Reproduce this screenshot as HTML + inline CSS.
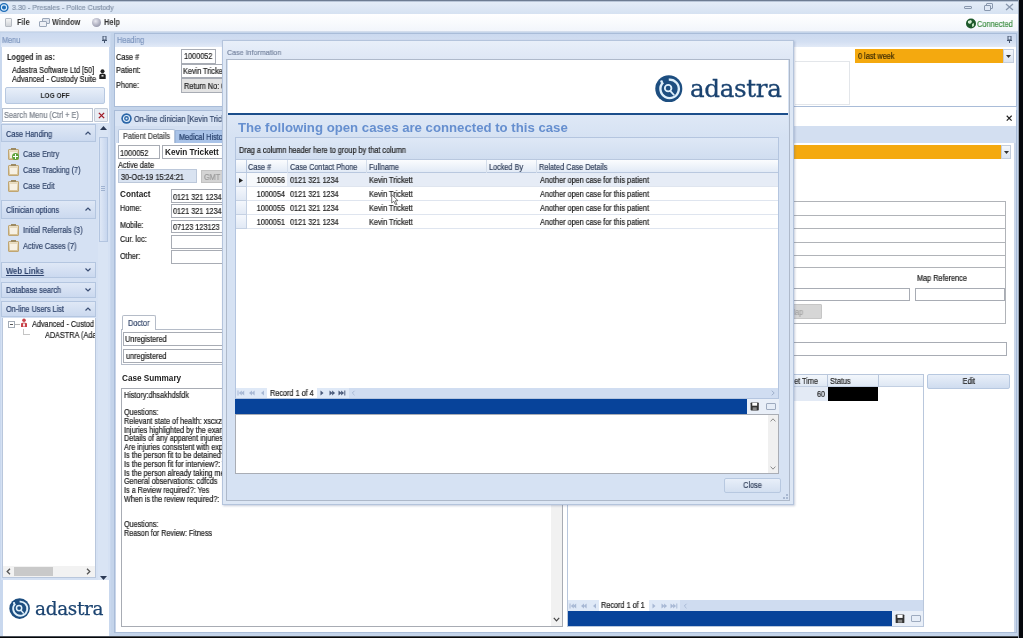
<!DOCTYPE html>
<html lang="en">
<head>
<meta charset="utf-8">
<title>3.30 - Presales - Police Custody</title>
<style>
*{box-sizing:border-box;margin:0;padding:0}
html,body{width:1023px;height:638px;overflow:hidden}
body{position:relative;background:#c4d4ea;font-family:"Liberation Sans",sans-serif;font-size:8.2px;color:#1c1c1c;line-height:1}
.a{position:absolute}
.t{position:absolute;white-space:nowrap;margin-top:1px;will-change:transform;-webkit-text-stroke:.2px;transform:scaleX(.89);transform-origin:0 50%;line-height:10px;height:10px}
.tr{transform-origin:100% 50%;text-align:right}
.b{position:absolute;white-space:nowrap;font-weight:bold;will-change:transform;line-height:10px;height:10px}
.in{position:absolute;background:#fff;border:1px solid #a8acb4;overflow:hidden}
.hd{position:absolute;background:linear-gradient(#cbd9ef,#d3dff2 60%,#e2eaf7)}
.w{background:#fff}
.gh{position:absolute;left:1px;width:95px;background:linear-gradient(#dfe8f6,#cbd9ef);border:1px solid #b4c6e0;color:#2a3f66}
.gh .t{left:4px;top:3px;color:#2c416a}
.chev{position:absolute;left:83px;top:5px;width:6px;height:4px}
.ic{position:absolute;width:11px;height:11px;border-radius:1px;background:linear-gradient(#eadfc6,#d6c193);border:1px solid #c0a673}
.ic:before{content:"";position:absolute;left:2px;top:-2px;width:5px;height:2px;background:#9c8a62}
.ic:after{content:"";position:absolute;left:1px;top:2px;width:7px;height:6px;background:#f7f1e4}
.nav{color:#33466a}
</style>
</head>
<body>
<div id="root" style="position:absolute;left:0;top:0;width:1023px;height:638px;overflow:hidden">

<!-- ===== window chrome ===== -->
<div class="a" style="left:0;top:0;width:1023px;height:14px;background:linear-gradient(#e6eef8,#d6e2f2)"></div>
<div class="a" style="left:0;top:0;width:1023px;height:1px;background:#6d7c92"></div>
<div class="a" style="left:0;top:1px;width:1023px;height:1px;background:#b9c6d8"></div>
<svg class="a" style="left:0;top:2px" width="10" height="11" viewBox="0 0 10 11"><circle cx="4" cy="5.5" r="4.6" fill="#1f6db8"/><circle cx="4" cy="5.5" r="2.6" fill="none" stroke="#d9ecfb" stroke-width="1.1"/></svg>
<div class="t" style="left:12px;top:2px;color:#8493a8;font-size:8px">3.30 - Presales - Police Custody</div>
<!-- window buttons -->
<div class="a" style="left:964px;top:6px;width:8px;height:3px;border:1px solid #8897ad;border-radius:1px"></div>
<div class="a" style="left:986px;top:3px;width:7px;height:6px;border:1px solid #8897ad;border-radius:1px"></div>
<div class="a" style="left:984px;top:5px;width:7px;height:6px;border:1px solid #8897ad;border-radius:1px;background:#dfe8f5"></div>
<svg class="a" style="left:1005px;top:3px" width="9" height="8" viewBox="0 0 9 8"><path d="M1 1 L8 7 M8 1 L1 7" stroke="#8897ad" stroke-width="1.3" fill="none"/></svg>

<!-- menu bar -->
<div class="a" style="left:0;top:14px;width:1023px;height:18px;background:linear-gradient(#ffffff,#f1f5fb)"></div>
<div class="a" style="left:0;top:31px;width:1023px;height:1px;background:#d3ddec"></div>
<div class="a" style="left:5px;top:18px;width:7px;height:9px;background:linear-gradient(#f6f6f6,#cfd3d8);border:1px solid #b5bac2;border-radius:1px"></div>
<div class="b" style="left:17px;top:18px;font-size:8.2px;color:#333;transform:scaleX(.9);transform-origin:0 50%">File</div>
<div class="a" style="left:42px;top:18px;width:8px;height:6px;background:#dfe5ee;border:1px solid #9aa6b8;border-radius:1px"></div>
<div class="a" style="left:39px;top:21px;width:8px;height:6px;background:#eef1f6;border:1px solid #9aa6b8;border-radius:1px"></div>
<div class="b" style="left:52px;top:18px;font-size:8.2px;color:#333;transform:scaleX(.9);transform-origin:0 50%">Window</div>
<div class="a" style="left:92px;top:18px;width:9px;height:9px;border-radius:50%;background:radial-gradient(circle at 40% 35%,#e8e8f0,#7c7f96)"></div>
<div class="b" style="left:104px;top:18px;font-size:8.2px;color:#333;transform:scaleX(.9);transform-origin:0 50%">Help</div>
<!-- connected -->
<svg class="a" style="left:965px;top:18px" width="12" height="11" viewBox="0 0 12 11"><circle cx="6" cy="5.5" r="5" fill="#1e5a2c"/><path d="M3 3 L6 2 L7 4 L5 6 L3 5 Z" fill="#d6efd6"/><path d="M7 6 L9 5 L9 8 L7 9 Z" fill="#bfe3bf"/></svg>
<div class="t" style="left:977px;top:18px;color:#3f8f45;font-size:8.3px">Connected</div>

<!-- ===== left panel ===== -->
<div class="a" style="left:0;top:33px;width:111px;height:603px;background:#c9d8ee"></div>
<div class="hd" style="left:1px;top:33px;width:109px;height:14px"></div>
<div class="t" style="left:2px;top:35px;color:#7f97bf">Menu</div>
<svg class="a" style="left:102px;top:36px" width="5" height="7" viewBox="0 0 5 7"><rect x="1" y="0" width="3" height="4" fill="none" stroke="#44546e" stroke-width="1"/><path d="M0 4.5H5M2.5 4.5V7" stroke="#44546e" stroke-width="1"/></svg>
<div class="a w" style="left:2px;top:47px;width:107px;height:76px"></div>
<div class="b" style="left:7px;top:53.2px;font-size:8.2px;transform:scaleX(.9);transform-origin:0 50%">Logged in as:</div>
<div class="t" style="left:12px;top:65px">Adastra Software Ltd [50]</div>
<div class="t" style="left:12px;top:74px">Advanced - Custody Suite</div>
<svg class="a" style="left:99px;top:69px" width="7" height="10" viewBox="0 0 7 10"><circle cx="3.5" cy="2.2" r="2" fill="#222"/><path d="M0.3 10 V6.5 Q0.3 4.5 3.5 4.5 Q6.7 4.5 6.7 6.5 V10 Z" fill="#222"/><rect x="2.5" y="6" width="2" height="1.6" fill="#ddd"/></svg>
<div class="a" style="left:5px;top:87px;width:100px;height:17px;border:1px solid #b7c8e0;border-radius:2px;background:linear-gradient(#e8eff9,#cfdcef)"></div>
<div class="b" style="left:5px;top:91px;width:100px;text-align:center;font-size:7.6px;transform:scaleX(.86)">LOG OFF</div>
<div class="in" style="left:2px;top:108px;width:91px;height:14px;border-color:#b9c2d0"></div>
<div class="t" style="left:4px;top:110px;color:#7b818b">Search Menu (Ctrl + E)</div>
<div class="a" style="left:94px;top:108px;width:14px;height:14px;border:1px solid #c2cbd8;background:#e9edf3;border-radius:1px"></div>
<svg class="a" style="left:97.5px;top:111.5px" width="7" height="7" viewBox="0 0 8 8"><path d="M1 1L7 7M7 1L1 7" stroke="#a01c28" stroke-width="1.6"/></svg>

<!-- nav pane -->
<div class="a" style="left:1px;top:123px;width:109px;height:457px;background:#d5e1f3"></div>
<div class="gh" style="top:124px;height:18px"><div class="t" style="top:3.6px">Case Handing</div><svg class="chev" viewBox="0 0 6 4" style="top:6px"><path d="M.5 3.5L3 1L5.5 3.5" fill="none" stroke="#3a4e74" stroke-width="1.2"/></svg></div>
<div class="ic" style="left:8px;top:149px"></div><div class="a" style="left:12px;top:153px;width:7px;height:7px;border-radius:50%;background:#5da23a"></div><div class="a" style="left:13px;top:156px;width:5px;height:1px;background:#fff"></div><div class="a" style="left:15px;top:154px;width:1px;height:5px;background:#fff"></div>
<div class="t nav" style="left:23px;top:149px">Case Entry</div>
<div class="ic" style="left:8px;top:165px"></div>
<div class="t nav" style="left:23px;top:164.7px">Case Tracking (7)</div>
<div class="ic" style="left:8px;top:181px"></div>
<div class="t nav" style="left:23px;top:180.7px">Case Edit</div>

<div class="gh" style="top:200.4px;height:18.3px"><div class="t" style="top:3.5px">Clinician options</div><svg class="chev" viewBox="0 0 6 4" style="top:6px"><path d="M.5 3.5L3 1L5.5 3.5" fill="none" stroke="#3a4e74" stroke-width="1.2"/></svg></div>
<div class="ic" style="left:8px;top:225px"></div>
<div class="t nav" style="left:23px;top:225px">Initial Referrals (3)</div>
<div class="ic" style="left:8px;top:241px"></div>
<div class="t nav" style="left:23px;top:241px">Active Cases (7)</div>

<div class="gh" style="top:262px;height:16px"><div class="b" style="left:4px;top:3.5px;color:#2c416a;text-decoration:underline;font-size:8.2px;transform:scaleX(.93);transform-origin:0 50%">Web Links</div><svg class="chev" viewBox="0 0 6 4"><path d="M.5 .5L3 3L5.5 .5" fill="none" stroke="#3a4e74" stroke-width="1.2"/></svg></div>
<div class="gh" style="top:282px;height:16px"><div class="t" style="top:2px">Database search</div><svg class="chev" viewBox="0 0 6 4"><path d="M.5 .5L3 3L5.5 .5" fill="none" stroke="#3a4e74" stroke-width="1.2"/></svg></div>
<div class="gh" style="top:301px;height:16px"><div class="t" style="top:2.3px">On-line Users List</div><svg class="chev" viewBox="0 0 6 4"><path d="M.5 3.5L3 1L5.5 3.5" fill="none" stroke="#3a4e74" stroke-width="1.2"/></svg></div>

<!-- tree -->
<div class="a w" style="left:2px;top:318px;width:94px;height:260px;border:1px solid #b9c7dc;border-top:none"></div>
<div class="a" style="left:8px;top:321px;width:7px;height:7px;border:1px solid #a4acb6;background:#fff"></div>
<div class="a" style="left:10px;top:324px;width:3px;height:1px;background:#555"></div>
<div class="a" style="left:15px;top:324px;width:5px;height:1px;background:#b5b5b5"></div>
<div class="a" style="left:23px;top:329px;width:1px;height:6px;background:#c5c5c5"></div>
<div class="a" style="left:23px;top:334px;width:7px;height:1px;background:#c5c5c5"></div>
<svg class="a" style="left:20px;top:318px" width="8" height="10" viewBox="0 0 8 10"><circle cx="4" cy="2.3" r="1.8" fill="#c9434a"/><path d="M1 9V6Q1 4.5 4 4.5Q7 4.5 7 6V9Z" fill="#c9434a"/><rect x="3" y="5.5" width="2" height="3" fill="#f4e9e9"/></svg>
<div class="t" style="left:32px;top:319px;width:70px;overflow:hidden">Advanced - Custody Suite</div>
<div class="t" style="left:45px;top:330px;width:56px;overflow:hidden">ADASTRA (Adastra)</div>
<!-- tree hscroll -->
<div class="a" style="left:3px;top:566px;width:92px;height:11px;background:#f2f2f2"></div>
<div class="a" style="left:14px;top:567px;width:39px;height:9px;background:#c9c9c9"></div>
<svg class="a" style="left:6px;top:568px" width="5" height="7" viewBox="0 0 5 7"><path d="M4 .8L1.2 3.5L4 6.2" fill="none" stroke="#555" stroke-width="1.3"/></svg>
<svg class="a" style="left:86px;top:568px" width="5" height="7" viewBox="0 0 5 7"><path d="M1 .8L3.8 3.5L1 6.2" fill="none" stroke="#555" stroke-width="1.3"/></svg>
<!-- nav vscroll -->
<div class="a" style="left:98px;top:124px;width:10px;height:456px;background:#d9e4f4"></div>
<div class="a" style="left:99px;top:137px;width:9px;height:105px;background:linear-gradient(90deg,#dfe8f6,#c7d6ee);border:1px solid #b3c5e0"></div>
<div class="a" style="left:101px;top:186px;width:4px;height:1px;background:#9fb2d0"></div><div class="a" style="left:101px;top:188px;width:4px;height:1px;background:#9fb2d0"></div><div class="a" style="left:101px;top:190px;width:4px;height:1px;background:#9fb2d0"></div>
<svg class="a" style="left:100px;top:126px" width="7" height="4" viewBox="0 0 7 4"><path d="M0 4L3.5 0L7 4Z" fill="#2c3a55"/></svg>
<svg class="a" style="left:100px;top:576px" width="7" height="4" viewBox="0 0 7 4"><path d="M0 0L3.5 4L7 0Z" fill="#2c3a55"/></svg>
<!-- logo -->
<div class="a w" style="left:3px;top:580px;width:106px;height:56px"></div>
<svg class="a" style="left:9.4px;top:598.2px" width="21.2" height="21.2" viewBox="0 0 21 21"><circle cx="10.5" cy="10.5" r="10.2" fill="#1d4e80"/><path d="M6.2 5.6 A7 7 0 1 0 10.5 3.6" fill="none" stroke="#dff0fb" stroke-width="1.9"/><circle cx="10" cy="10" r="2.6" fill="none" stroke="#dff0fb" stroke-width="1.5"/><path d="M11.6 12L14.6 15.4" stroke="#dff0fb" stroke-width="1.5"/><circle cx="5" cy="5" r="1.1" fill="#dff0fb"/></svg>
<div class="a" style="left:35px;top:594.9px;font-family:'DejaVu Serif','Liberation Serif',serif;font-size:18.4px;line-height:28px;color:#1b4370;-webkit-text-stroke:.25px #1b4370;letter-spacing:-.3px;white-space:nowrap;will-change:transform">adastra</div>


<!-- ===== Heading panel ===== -->
<div class="a" style="left:114px;top:33px;width:903px;height:74px;background:#fff;border:1px solid #a9bcd8"></div>
<div class="hd" style="left:115px;top:34px;width:901px;height:13px"></div>
<div class="t" style="left:117px;top:35px;color:#7f97bf">Heading</div>
<svg class="a" style="left:1007px;top:36px" width="5" height="7" viewBox="0 0 5 7"><rect x="1" y="0" width="3" height="4" fill="none" stroke="#44546e" stroke-width="1"/><path d="M0 4.5H5M2.5 4.5V7" stroke="#44546e" stroke-width="1"/></svg>
<div class="t" style="left:116px;top:52px">Case #</div>
<div class="t" style="left:116px;top:65px">Patient:</div>
<div class="t" style="left:116px;top:80px">Phone:</div>
<div class="in" style="left:181px;top:49px;width:35px;height:15px"></div><div class="t" style="left:184px;top:51px">1000052</div>
<div class="in" style="left:181px;top:64px;width:60px;height:14px"></div><div class="t" style="left:183px;top:66px">Kevin Trickett</div>
<div class="in" style="left:181px;top:78px;width:60px;height:15px;background:#e3e3e3"></div><div class="t" style="left:184px;top:81px">Return No: 0</div>
<!-- heading right part -->
<div class="a" style="left:795px;top:61px;width:55px;height:44px;border:1px solid #e3e6ea;border-left:none"></div>
<div class="a" style="left:855px;top:49px;width:148px;height:14px;background:#f4a90f"></div>
<div class="t" style="left:858px;top:51px;color:#3a2a05">0 last week</div>
<div class="a" style="left:1003px;top:49px;width:11px;height:14px;background:linear-gradient(#f4f7fb,#dbe4f1);border:1px solid #c3cddd"></div>
<svg class="a" style="left:1006px;top:55px" width="5" height="3" viewBox="0 0 5 3"><path d="M0 0L2.5 3L5 0Z" fill="#333"/></svg>

<!-- ===== Main panel ===== -->
<div class="a" style="left:114px;top:110px;width:903px;height:523px;background:#fff;border:1px solid #a9bcd8"></div>
<div class="a" style="left:115px;top:111px;width:901px;height:16px;background:#d9e4f4"></div>
<div class="a w" style="left:560px;top:107px;width:456px;height:19px"></div>
<svg class="a" style="left:1005.8px;top:114.8px" width="6.4" height="6.4" viewBox="0 0 7 7"><path d="M.8 .8L6.2 6.2M6.2 .8L.8 6.2" stroke="#222" stroke-width="1.25"/></svg>
<div class="a" style="left:115px;top:126px;width:901px;height:17px;background:#d3dff1"></div>
<svg class="a" style="left:121px;top:113px" width="11" height="11" viewBox="0 0 11 11"><circle cx="5.5" cy="5.5" r="5.2" fill="#2a66a8"/><circle cx="5.5" cy="5.5" r="3" fill="none" stroke="#e4f1fc" stroke-width="1.2"/><circle cx="5.5" cy="5.5" r="1" fill="#e4f1fc"/></svg>
<div class="t" style="left:134px;top:114px;color:#33466a">On-line clinician [Kevin Trickett]</div>
<!-- tabs -->
<div class="a" style="left:175px;top:130px;width:60px;height:13px;background:#a9c3e8;border:1px solid #9bb5da;border-bottom:none"></div>
<div class="t" style="left:179px;top:132px;color:#203a66">Medical History</div>
<div class="a w" style="left:118px;top:128.6px;width:57px;height:15.4px;border:1px solid #b3c3da;border-bottom:none;border-radius:2px 2px 0 0"></div>
<div class="t" style="left:123px;top:131.2px;color:#444">Patient Details</div>
<div class="a w" style="left:116px;top:143px;width:898px;height:489px"></div>
<div class="a" style="left:115px;top:143px;width:1px;height:489px;background:#c9d6ea"></div>
<div class="a" style="left:1014px;top:143px;width:2px;height:489px;background:#c9d6ea"></div>

<!-- patient details -->
<div class="in" style="left:118px;top:145px;width:42px;height:14px"></div><div class="t" style="left:120px;top:147.5px">1000052</div>
<div class="in" style="left:162px;top:145px;width:70px;height:14px"></div><div class="b" style="left:165px;top:148px;font-size:8.2px">Kevin Trickett</div>
<div class="t" style="left:118px;top:160px">Active date</div>
<div class="in" style="left:118px;top:169px;width:79px;height:14px;background:#d9e3f1;border-color:#bcc8da"></div><div class="t" style="left:121px;top:172px">30-Oct-19 15:24:21</div>
<div class="a" style="left:201px;top:170px;width:22px;height:13px;background:#d4d4d4;border:1px solid #c2c2c2"></div><div class="t" style="left:204px;top:172px;color:#9a9a9a">GMT</div>
<div class="b" style="left:120px;top:190px;font-size:8.2px">Contact</div>
<div class="t" style="left:120px;top:203px">Home:</div>
<div class="t" style="left:120px;top:220px">Mobile:</div>
<div class="t" style="left:120px;top:234px">Cur. loc:</div>
<div class="t" style="left:120px;top:251px">Other:</div>
<div class="in" style="left:171px;top:189px;width:60px;height:14px"></div><div class="t" style="left:173px;top:192px">0121 321 1234</div>
<div class="in" style="left:171px;top:204px;width:60px;height:14px"></div><div class="t" style="left:173px;top:206px">0121 321 1234</div>
<div class="in" style="left:171px;top:220px;width:60px;height:13px"></div><div class="t" style="left:173px;top:222px">07123 123123</div>
<div class="in" style="left:171px;top:235px;width:60px;height:14px"></div>
<div class="in" style="left:171px;top:250px;width:60px;height:14px"></div>
<!-- doctor tab -->
<div class="a" style="left:121px;top:329px;width:120px;height:36px;border:1px solid #b5bcc8"></div>
<div class="a w" style="left:122px;top:315px;width:34px;height:15px;border:1px solid #b5bcc8;border-bottom:none;border-radius:2px 2px 0 0"></div>
<div class="t" style="left:128px;top:318.3px;color:#33466a">Doctor</div>
<div class="in" style="left:123px;top:332px;width:118px;height:14px"></div><div class="t" style="left:125px;top:334.3px">Unregistered</div>
<div class="in" style="left:123px;top:349px;width:118px;height:14px"></div><div class="t" style="left:126px;top:351.3px">unregistered</div>
<div class="b" style="left:122px;top:374px;font-size:8.2px">Case Summary</div>
<!-- case summary textarea -->
<div class="a w" style="left:120.6px;top:388.4px;width:442.4px;height:238.6px;border:1px solid #a8acb4"></div>
<div class="a" style="left:551px;top:389px;width:11px;height:237px;background:#f1f1f1"></div>
<svg class="a" style="left:553px;top:617px" width="7" height="5" viewBox="0 0 7 5"><path d="M.8 .8L3.5 3.8L6.2 .8" fill="none" stroke="#444" stroke-width="1.2"/></svg>
<div class="a" id="cs" style="will-change:transform;-webkit-text-stroke:.2px;left:124px;top:391.8px;width:200px;line-height:8.62px;transform:scaleX(.88);transform-origin:0 0;white-space:pre">History:dhsakhdsfdk

Questions:
Relevant state of health: xscxzc
Injuries highlighted by the examination:
Details of any apparent injuries:
Are injuries consistent with explanation:
Is the person fit to be detained?: Yes
Is the person fit for interview?: Yes
Is the person already taking medication:
General observations: cdfcds
Is a Review required?: Yes
When is the review required?:


Questions:
Reason for Review: Fitness</div>

<!-- ===== right side of main panel ===== -->
<div class="a" style="left:700px;top:145px;width:301px;height:14px;background:#f4a90f"></div>
<div class="a" style="left:1001px;top:145px;width:10px;height:14px;background:linear-gradient(#f4f7fb,#dbe4f1);border:1px solid #c3cddd"></div>
<svg class="a" style="left:1004px;top:151px" width="5" height="3" viewBox="0 0 5 3"><path d="M0 0L2.5 3L5 0Z" fill="#333"/></svg>
<!-- address box -->
<div class="a" style="left:700px;top:201px;width:306px;height:123px;border:1px solid #b0b3b8"></div>
<div class="a" style="left:700px;top:215px;width:305px;height:1px;background:#b0b3b8"></div>
<div class="a" style="left:700px;top:228px;width:305px;height:1px;background:#b0b3b8"></div>
<div class="a" style="left:700px;top:242px;width:305px;height:1px;background:#b0b3b8"></div>
<div class="a" style="left:700px;top:255px;width:305px;height:1px;background:#b0b3b8"></div>
<div class="a" style="left:700px;top:267px;width:305px;height:1px;background:#b0b3b8"></div>
<div class="t" style="left:917px;top:273px">Map Reference</div>
<div class="in" style="left:700px;top:288px;width:210px;height:13px"></div>
<div class="in" style="left:915px;top:288px;width:90px;height:13px"></div>
<div class="a" style="left:760px;top:304px;width:62px;height:15px;background:#d6d6d6;border:1px solid #c6c6c6;border-radius:1px"></div>
<div class="t" style="left:789px;top:307px;color:#a6a6a6">Map</div>
<div class="in" style="left:700px;top:342px;width:307px;height:14px"></div>
<!-- small grid -->
<div class="a w" style="left:567px;top:374px;width:357px;height:253px;border:1px solid #b9c7dc"></div>
<div class="a" style="left:568px;top:375px;width:355px;height:12px;background:linear-gradient(#f3f7fc,#dfe8f4);border-bottom:1px solid #c2cfe2"></div>
<div class="a" style="left:827px;top:375px;width:1px;height:12px;background:#b9c7dc"></div>
<div class="a" style="left:878px;top:375px;width:1px;height:12px;background:#b9c7dc"></div>
<div class="t tr" style="left:758px;width:60px;top:376px;color:#222">Target Time</div>
<div class="t" style="left:830px;top:376px;color:#222">Status</div>
<div class="a" style="left:568px;top:387px;width:260px;height:14px;background:#e3eaf5"></div>
<div class="t tr" style="left:790px;width:35px;top:389px">60</div>
<div class="a" style="left:828px;top:387px;width:50px;height:14px;background:#000"></div>
<!-- edit button -->
<div class="a" style="left:927px;top:374px;width:83px;height:15px;border:1px solid #b7c8e0;border-radius:2px;background:linear-gradient(#e8eff9,#cfdcef)"></div>
<div class="t" style="left:927px;width:94px;top:376px;text-align:center">Edit</div>
<!-- small grid navigator -->
<div class="a" style="left:568px;top:600px;width:355px;height:11px;background:#dfe9f7"></div><div class="a" style="left:680px;top:600px;width:243px;height:11px;background:#cfdcf0"></div>
<div class="a w" style="left:599px;top:600px;width:50px;height:11px"></div>
<div class="t" style="left:601px;top:600px">Record 1 of 1</div>
<svg class="a" style="left:569px;top:601.5px" width="120" height="8" viewBox="0 0 120 8"><rect x="0.5" y="1.5" width="1" height="5" fill="#a7b8d4"/><path d="M4.8 1.5L1.8 4L4.8 6.5Z" fill="#a7b8d4"/><path d="M7.2 1.5L4.2 4L7.2 6.5Z" fill="#a7b8d4"/><path d="M15 1.5L12 4L15 6.5Z" fill="#a7b8d4"/><path d="M17.6 1.5L14.6 4L17.6 6.5Z" fill="#a7b8d4"/><path d="M27 1.5L24 4L27 6.5Z" fill="#a7b8d4"/><path d="M83.5 1.5L86.5 4L83.5 6.5Z" fill="#a7b8d4"/><path d="M92.5 1.5L95.5 4L92.5 6.5Z" fill="#a7b8d4"/><path d="M95.1 1.5L98.1 4L95.1 6.5Z" fill="#a7b8d4"/><path d="M101.5 1.5L104.5 4L101.5 6.5Z" fill="#a7b8d4"/><path d="M104.1 1.5L107.1 4L104.1 6.5Z" fill="#a7b8d4"/><rect x="107.3" y="1.5" width="1" height="5" fill="#a7b8d4"/><path d="M117.5 1.8L115.3 4L117.5 6.2" fill="none" stroke="#a7b8d4" stroke-width="1"/></svg>
<div class="a" style="left:568px;top:611px;width:324px;height:15px;background:#07439a"></div>
<div class="a" style="left:892px;top:611px;width:31px;height:15px;background:#e9eff8"></div>
<svg class="a" style="left:895.3px;top:613.6px" width="10" height="9.6" viewBox="0 0 11 11"><rect x=".5" y=".5" width="10" height="10" fill="#333" rx="1"/><rect x="2.5" y="1" width="6" height="3.5" fill="#fff"/><rect x="3" y="6.5" width="5" height="3.5" fill="#888"/></svg>
<div class="a" style="left:910.5px;top:615.3px;width:10px;height:7px;border:1px solid #9eabbf;border-radius:1px;background:#e6edf7"></div>


<!-- ===== Case Information dialog ===== -->
<div class="a" style="left:222px;top:40px;width:572px;height:465px;background:#dde7f5;border:1px solid #b4c4dc;box-shadow:1px 1px 2px rgba(90,110,150,.35)"></div>
<div class="a" style="left:223px;top:41px;width:570px;height:18px;background:linear-gradient(#e8eff9,#dee7f5)"></div>
<div class="t" style="left:227px;top:47px;color:#7a88a2;font-size:8px">Case Information</div>
<div class="a" style="left:226.3px;top:58.8px;width:563.4px;height:442px;background:#d6e2f3;border:1.4px solid #aeb9ca"></div>
<div class="a w" style="left:227.7px;top:60.2px;width:560.6px;height:52.8px"></div>
<div class="a" style="left:227.7px;top:113px;width:560.6px;height:2px;background:#1c4e8b"></div>
<div class="a" style="left:227.7px;top:115px;width:560.6px;height:22px;background:linear-gradient(#dee8f6,#d6e2f3)"></div>
<!-- dialog logo -->
<svg class="a" style="left:655.4px;top:74.7px" width="27.6" height="27.6" viewBox="0 0 21 21"><circle cx="10.5" cy="10.5" r="10.3" fill="#1d4e80"/><path d="M6.2 5.6 A7 7 0 1 0 10.5 3.6" fill="none" stroke="#dff0fb" stroke-width="1.8"/><circle cx="10" cy="10" r="2.5" fill="none" stroke="#dff0fb" stroke-width="1.4"/><path d="M11.6 12L14.6 15.4" stroke="#dff0fb" stroke-width="1.4"/><circle cx="5" cy="5" r="1" fill="#dff0fb"/></svg>
<div class="a" style="left:689.5px;top:70.6px;font-family:'DejaVu Serif','Liberation Serif',serif;font-size:24.6px;line-height:36px;color:#1b4370;-webkit-text-stroke:.3px #1b4370;letter-spacing:-.35px;white-space:nowrap;will-change:transform">adastra</div>
<div class="b" style="left:238px;top:120.4px;font-size:13.2px;line-height:16px;height:16px;color:#668fcf">The following open cases are connected to this case</div>
<!-- grid -->
<div class="a w" style="left:235px;top:137px;width:544px;height:262px;border:1px solid #b4c5df"></div>
<div class="a" style="left:236px;top:138px;width:542px;height:22px;background:linear-gradient(#dee8f6,#d0ddf0);border-bottom:1px solid #b9c8df"></div>
<div class="t" style="left:239px;top:145px;color:#222">Drag a column header here to group by that column</div>
<div class="a" style="left:236px;top:160px;width:542px;height:13.2px;background:linear-gradient(#fbfcfe,#e2eaf6);border-bottom:1px solid #b9c8df"></div>
<div class="a" style="left:246px;top:160px;width:1px;height:13px;background:#b9c8df"></div>
<div class="a" style="left:287px;top:160px;width:1px;height:69px;background:#d5deeb"></div>
<div class="a" style="left:366px;top:160px;width:1px;height:69px;background:#d5deeb"></div>
<div class="a" style="left:486px;top:160px;width:1px;height:69px;background:#d5deeb"></div>
<div class="a" style="left:536px;top:160px;width:1px;height:69px;background:#d5deeb"></div>
<div class="t" style="left:248px;top:161.7px;color:#33415c">Case #</div>
<div class="t" style="left:289.5px;top:161.7px;color:#33415c">Case Contact Phone</div>
<div class="t" style="left:369px;top:161.7px;color:#33415c">Fullname</div>
<div class="t" style="left:489px;top:161.7px;color:#33415c">Locked By</div>
<div class="t" style="left:539px;top:161.7px;color:#33415c">Related Case Details</div>
<div class="a" style="left:247px;top:173.20px;width:531px;height:13.85px;background:#e6ecf6;border-bottom:1px solid #dfe5ef"></div>
<div class="a" style="left:247px;top:173.20px;width:40px;height:12.85px;background:#f7f9fc"></div>
<div class="a" style="left:236px;top:173.20px;width:11px;height:13.85px;background:linear-gradient(#f4f7fc,#e1e9f5);border-bottom:1px solid #c5d1e3;border-right:1px solid #c5d1e3"></div>
<div class="t tr" style="left:245px;width:40px;top:175.10px">1000056</div><div class="t" style="left:290px;top:175.10px">0121 321 1234</div><div class="t" style="left:369px;top:175.10px">Kevin Trickett</div><div class="t" style="left:540px;top:175.10px">Another open case for this patient</div>
<div class="a" style="left:247px;top:187.05px;width:531px;height:13.85px;background:#fff;border-bottom:1px solid #dfe5ef"></div>
<div class="a" style="left:236px;top:187.05px;width:11px;height:13.85px;background:linear-gradient(#f4f7fc,#e1e9f5);border-bottom:1px solid #c5d1e3;border-right:1px solid #c5d1e3"></div>
<div class="t tr" style="left:245px;width:40px;top:188.95px">1000054</div><div class="t" style="left:290px;top:188.95px">0121 321 1234</div><div class="t" style="left:369px;top:188.95px">Kevin Trickett</div><div class="t" style="left:540px;top:188.95px">Another open case for this patient</div>
<div class="a" style="left:247px;top:200.90px;width:531px;height:13.85px;background:#fff;border-bottom:1px solid #dfe5ef"></div>
<div class="a" style="left:236px;top:200.90px;width:11px;height:13.85px;background:linear-gradient(#f4f7fc,#e1e9f5);border-bottom:1px solid #c5d1e3;border-right:1px solid #c5d1e3"></div>
<div class="t tr" style="left:245px;width:40px;top:202.80px">1000055</div><div class="t" style="left:290px;top:202.80px">0121 321 1234</div><div class="t" style="left:369px;top:202.80px">Kevin Trickett</div><div class="t" style="left:540px;top:202.80px">Another open case for this patient</div>
<div class="a" style="left:247px;top:214.75px;width:531px;height:13.85px;background:#fff;border-bottom:1px solid #dfe5ef"></div>
<div class="a" style="left:236px;top:214.75px;width:11px;height:13.85px;background:linear-gradient(#f4f7fc,#e1e9f5);border-bottom:1px solid #c5d1e3;border-right:1px solid #c5d1e3"></div>
<div class="t tr" style="left:245px;width:40px;top:216.65px">1000051</div><div class="t" style="left:290px;top:216.65px">0121 321 1234</div><div class="t" style="left:369px;top:216.65px">Kevin Trickett</div><div class="t" style="left:540px;top:216.65px">Another open case for this patient</div>
<svg class="a" style="left:239.3px;top:177.8px" width="4" height="5" viewBox="0 0 4 5"><path d="M0 0L4 2.5L0 5Z" fill="#222"/></svg>
<!-- cursor -->
<svg class="a" style="left:391px;top:194px" width="8" height="11" viewBox="0 0 8 11"><path d="M.7 .7V9L2.8 7.2L4.2 10.3L5.6 9.7L4.3 6.7H7Z" fill="#fff" stroke="#555" stroke-width=".8"/></svg>
<!-- grid navigator -->
<div class="a" style="left:236px;top:388px;width:542px;height:10px;background:#dfe9f7"></div><div class="a" style="left:349px;top:388px;width:429px;height:10px;background:#d0ddf1"></div>
<div class="a w" style="left:267px;top:388px;width:50px;height:10px"></div>
<div class="t" style="left:270px;top:388px">Record 1 of 4</div>
<svg class="a" style="left:237px;top:388.7px" width="120" height="8" viewBox="0 0 120 8"><rect x="0.5" y="1.5" width="1" height="5" fill="#a7b8d4"/><path d="M4.8 1.5L1.8 4L4.8 6.5Z" fill="#a7b8d4"/><path d="M7.2 1.5L4.2 4L7.2 6.5Z" fill="#a7b8d4"/><path d="M15 1.5L12 4L15 6.5Z" fill="#a7b8d4"/><path d="M17.6 1.5L14.6 4L17.6 6.5Z" fill="#a7b8d4"/><path d="M27 1.5L24 4L27 6.5Z" fill="#a7b8d4"/><path d="M83.5 1.5L86.5 4L83.5 6.5Z" fill="#4a5a7a"/><path d="M92.5 1.5L95.5 4L92.5 6.5Z" fill="#4a5a7a"/><path d="M95.1 1.5L98.1 4L95.1 6.5Z" fill="#4a5a7a"/><path d="M101.5 1.5L104.5 4L101.5 6.5Z" fill="#4a5a7a"/><path d="M104.1 1.5L107.1 4L104.1 6.5Z" fill="#4a5a7a"/><rect x="107.3" y="1.5" width="1" height="5" fill="#4a5a7a"/><path d="M117.5 1.8L115.3 4L117.5 6.2" fill="none" stroke="#a7b8d4" stroke-width="1"/></svg>
<svg class="a" style="left:771px;top:390px" width="4" height="6" viewBox="0 0 4 6"><path d="M.7 .7L3.2 3L.7 5.3" fill="none" stroke="#9fb0cc" stroke-width="1"/></svg>
<!-- blue bar -->
<div class="a" style="left:235px;top:399px;width:512px;height:15px;background:#07439a"></div>
<div class="a" style="left:747px;top:399px;width:32px;height:15px;background:#e9eff8"></div>
<svg class="a" style="left:750.3px;top:401.8px" width="9.4" height="9" viewBox="0 0 11 11"><rect x=".5" y=".5" width="10" height="10" fill="#333" rx="1"/><rect x="2.5" y="1" width="6" height="3.5" fill="#fff"/><rect x="3" y="6.5" width="5" height="3.5" fill="#888"/></svg>
<div class="a" style="left:766px;top:403.3px;width:9.5px;height:6.6px;border:1px solid #9eabbf;border-radius:1px;background:#e6edf7"></div>
<!-- memo -->
<div class="a w" style="left:235px;top:414px;width:544px;height:60px;border:1px solid #a9adb5"></div>
<div class="a" style="left:768px;top:415px;width:10px;height:58px;background:#f0f0f0"></div>
<svg class="a" style="left:770px;top:418px" width="6" height="4" viewBox="0 0 6 4"><path d="M.6 3.4L3 .8L5.4 3.4" fill="none" stroke="#8a8a8a" stroke-width="1"/></svg>
<svg class="a" style="left:770px;top:466px" width="6" height="4" viewBox="0 0 6 4"><path d="M.6 .6L3 3.2L5.4 .6" fill="none" stroke="#8a8a8a" stroke-width="1"/></svg>
<!-- close -->
<div class="a" style="left:724px;top:478px;width:57px;height:15px;border:1px solid #b7c8e0;border-radius:2px;background:linear-gradient(#e8eff9,#d3dff0)"></div>
<div class="t" style="left:724px;width:64px;top:480px;text-align:center;color:#33415c">Close</div>
<!-- grip -->
<div class="a" style="left:786px;top:497px;width:2px;height:2px;background:#a9b9d2"></div><div class="a" style="left:783px;top:497px;width:2px;height:2px;background:#a9b9d2"></div><div class="a" style="left:786px;top:494px;width:2px;height:2px;background:#a9b9d2"></div>

<!-- bottom edge -->
<div class="a" style="left:110px;top:633px;width:913px;height:3px;background:#c4d4ea"></div>
<div class="a" style="left:0;top:636px;width:1023px;height:1px;background:#4a5058"></div><div class="a" style="left:0;top:637px;width:1023px;height:1px;background:#050608"></div>
<div class="a" style="left:1018px;top:0;width:1px;height:638px;background:#98a3b3"></div><div class="a" style="left:1019px;top:0;width:4px;height:638px;background:#05070c"></div>

</div>
</body>
</html>
